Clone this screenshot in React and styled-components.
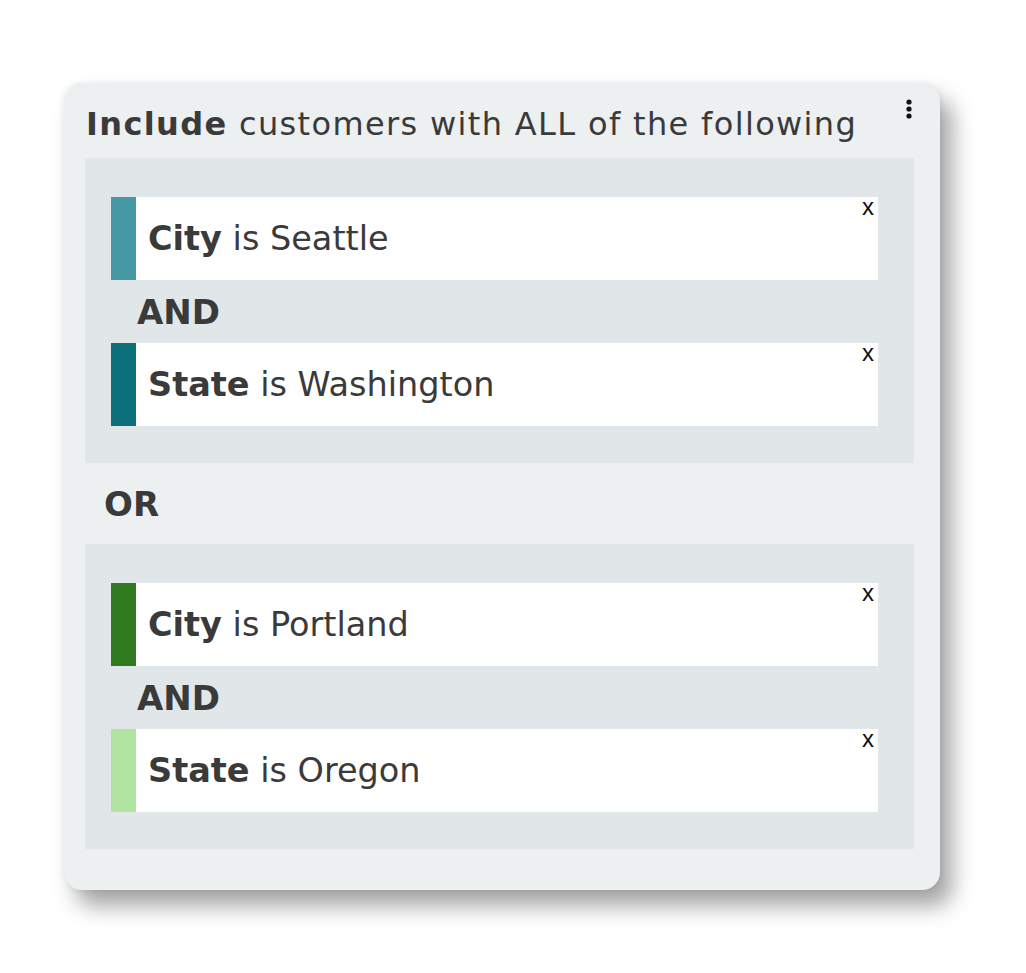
import React from "react";
import styled, { createGlobalStyle } from "styled-components";

const GlobalStyle = createGlobalStyle`
  body {
    margin: 0;
    background: #ffffff;
    font-family: "DejaVu Sans", "Open Sans", sans-serif;
    color: #3a3a3a;
  }
`;

const Page = styled.div`
  padding: 83px 0 0 64px;
  height: 890px;
`;

const Card = styled.div`
  position: relative;
  width: 876px;
  height: 807px;
  box-sizing: border-box;
  background: #ecf0f1;
  border-radius: 18px;
  padding: 0 26px 0 21px;
  box-shadow: 12px 16px 22px rgba(0, 0, 0, 0.36), 0 0 6px rgba(0, 0, 0, 0.08);
`;

const Title = styled.div`
  height: 75px;
  box-sizing: border-box;
  padding: 20px 0 0 1px;
  font-size: 32px;
  line-height: 42px;
  letter-spacing: 1.35px;
  white-space: nowrap;

  b {
    font-weight: 700;
  }
`;

const Kebab = styled.button`
  position: absolute;
  top: 16px;
  right: 27px;
  border: 0;
  background: none;
  padding: 0;
  width: 8px;
  height: 20px;
  cursor: pointer;
`;

const Group = styled.div`
  background: #e1e6e9;
  padding: 39px 36px 37px 26px;
  display: flex;
  flex-direction: column;
`;

const Row = styled.div`
  position: relative;
  height: 83px;
  background: #ffffff;
  display: flex;
  align-items: center;
  border-left: 25px solid ${(p) => p.$color};
  padding-left: 12px;
  font-size: 33.5px;
  white-space: nowrap;

  b {
    font-weight: 700;
  }
`;

const Close = styled.span`
  position: absolute;
  top: -2px;
  right: 4px;
  font-family: "Liberation Sans", sans-serif;
  font-size: 24px;
  font-weight: 400;
  line-height: 24px;
  color: #111;
  cursor: pointer;
`;

const Joiner = styled.div`
  height: ${(p) => p.$h}px;
  display: flex;
  align-items: center;
  padding-left: ${(p) => p.$left}px;
  font-size: 34px;
  font-weight: 700;
  color: #3a3a3a;
`;

const groups = [
  [
    { field: "City", value: "Seattle", color: "#4799a6" },
    { field: "State", value: "Washington", color: "#0b6f7a" },
  ],
  [
    { field: "City", value: "Portland", color: "#2f7a1f" },
    { field: "State", value: "Oregon", color: "#b0e4a0" },
  ],
];

function Condition({ field, value, color }) {
  return (
    <Row $color={color}>
      <span>
        <b>{field}</b> is {value}
      </span>
      <Close>x</Close>
    </Row>
  );
}

export default function App() {
  return (
    <Page>
      <GlobalStyle />
      <Card>
        <Title>
          <b>Include</b> customers with ALL of the following
        </Title>
        <Kebab aria-label="menu">
          <svg width="8" height="20" viewBox="0 0 8 20">
            <circle cx="4" cy="3" r="2.6" fill="#111" />
            <circle cx="4" cy="10" r="2.6" fill="#111" />
            <circle cx="4" cy="17" r="2.6" fill="#111" />
          </svg>
        </Kebab>
        {groups.map((g, gi) => (
          <React.Fragment key={gi}>
            {gi > 0 && (
              <Joiner $h={81} $left={19}>
                OR
              </Joiner>
            )}
            <Group>
              {g.map((c, ci) => (
                <React.Fragment key={ci}>
                  {ci > 0 && (
                    <Joiner $h={63} $left={26}>
                      AND
                    </Joiner>
                  )}
                  <Condition {...c} />
                </React.Fragment>
              ))}
            </Group>
          </React.Fragment>
        ))}
      </Card>
    </Page>
  );
}
